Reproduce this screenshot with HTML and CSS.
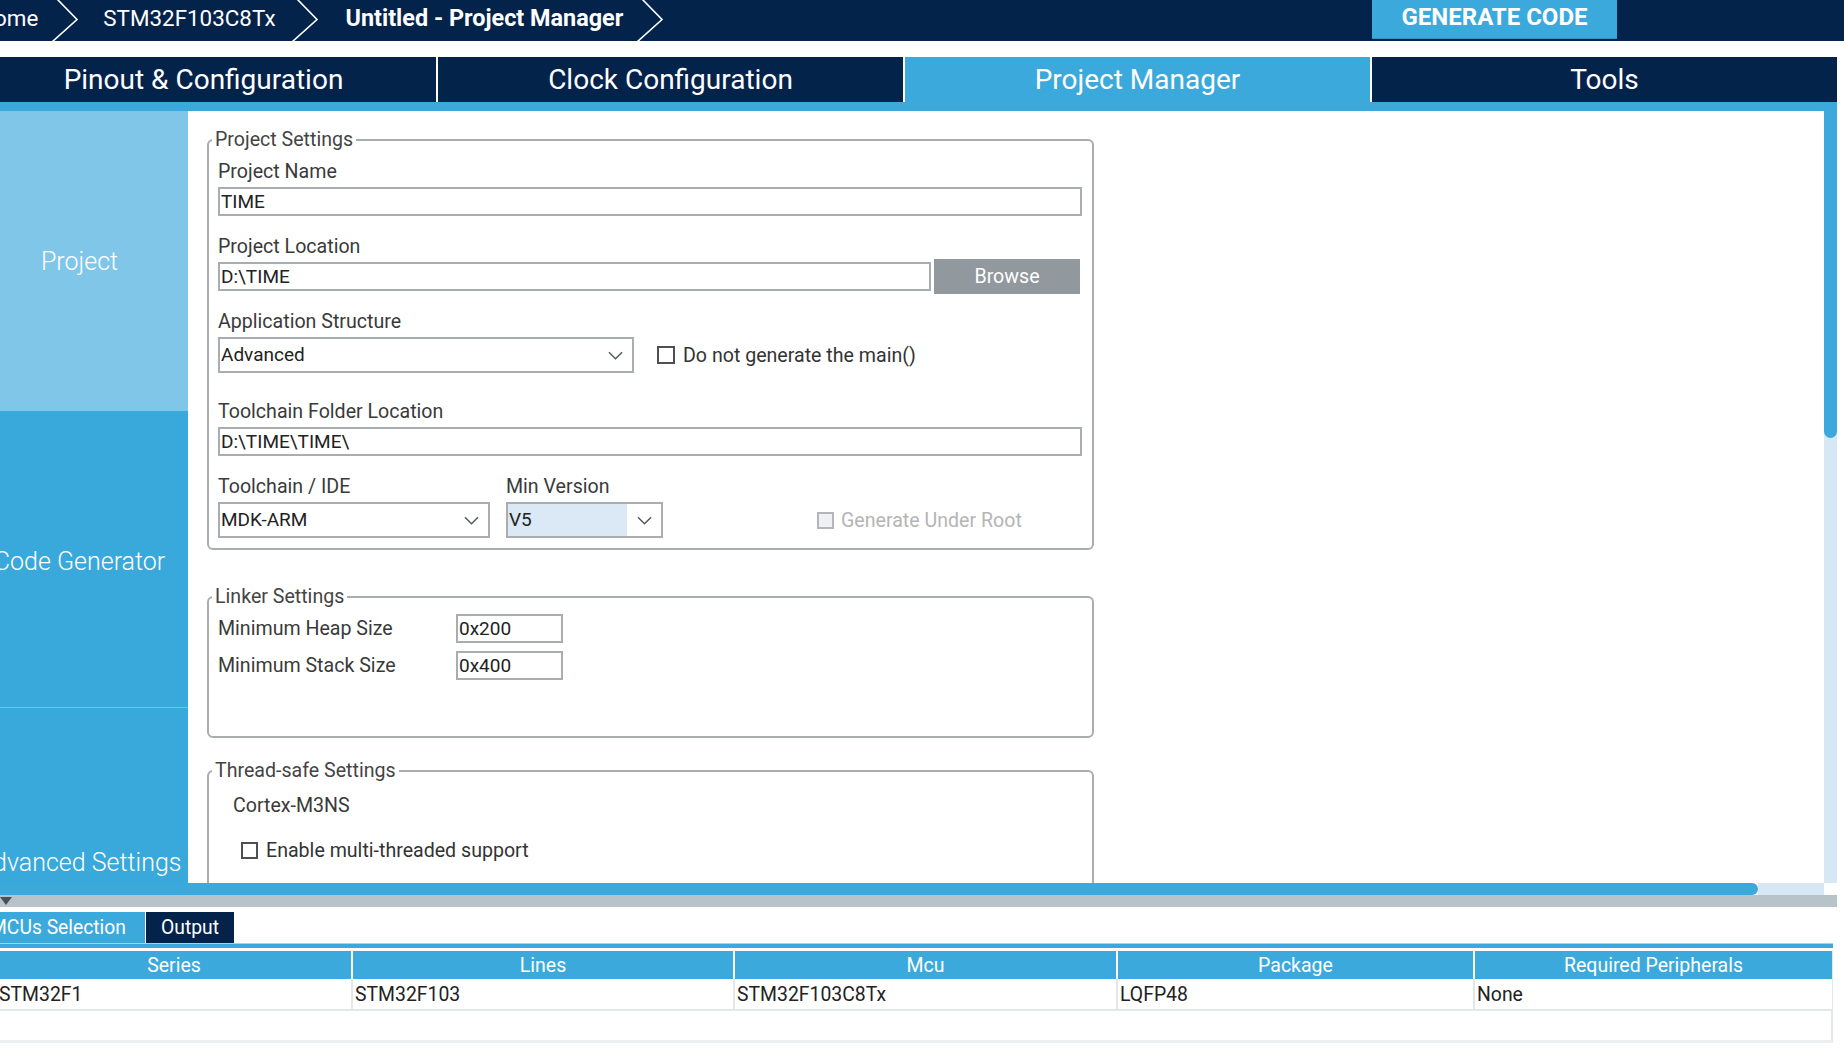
FILE: index.html
```html
<!DOCTYPE html>
<html lang="en">
<head>
<meta charset="utf-8">
<title>STM32CubeMX - Project Manager</title>
<link rel="stylesheet" href="styles.css">
</head>
<body>
<header class="topbar">
  <nav class="crumbs">
    <span class="crumb">Home</span>
    <svg class="chev" viewBox="0 0 30 41"><polyline points="8,-1 28,19.5 3,42"/></svg>
    <span class="crumb">STM32F103C8Tx</span>
    <svg class="chev chev-wide" viewBox="0 0 30 41"><polyline points="8,-1 28,19.5 3,42"/></svg>
    <span class="crumb crumb-current">Untitled - Project Manager</span>
    <svg class="chev" viewBox="0 0 30 41"><polyline points="8,-1 28,19.5 3,42"/></svg>
  </nav>
  <button class="generate">GENERATE CODE</button>
</header>

<div class="app">
  <nav class="tabs">
    <div class="tab">Pinout &amp; Configuration</div>
    <div class="tab">Clock Configuration</div>
    <div class="tab tab-active">Project Manager</div>
    <div class="tab">Tools</div>
  </nav>
  <div class="strip"></div>

  <div class="workspace">
    <aside class="sidebar">
      <div class="side-item side-active">Project</div>
      <div class="side-item side-mid">Code Generator</div>
      <div class="side-item side-last">Advanced Settings</div>
    </aside>

    <main class="content">
      <fieldset class="group group-project">
        <legend>Project Settings</legend>

        <div class="field">
          <div class="label">Project Name</div>
          <div class="input">TIME</div>
        </div>

        <div class="field field-loc">
          <div class="label label-tight">Project Location</div>
          <div class="row">
            <div class="input input-grow">D:\TIME</div>
            <button class="browse">Browse</button>
          </div>
        </div>

        <div class="field field-app">
          <div class="label">Application Structure</div>
          <div class="row">
            <div class="select select-app">
              <span class="select-value">Advanced</span>
              <span class="select-arrow"><svg viewBox="0 0 16 9"><polyline points="1,1 8,8 15,1"/></svg></span>
            </div>
            <label class="check check-main"><span class="box"></span>Do not generate the main()</label>
          </div>
        </div>

        <div class="field field-tcf">
          <div class="label">Toolchain Folder Location</div>
          <div class="input">D:\TIME\TIME\</div>
        </div>

        <div class="field field-ide">
          <div class="row row-bottom">
            <div class="col col-ide">
              <div class="label">Toolchain / IDE</div>
              <div class="select">
                <span class="select-value">MDK-ARM</span>
                <span class="select-arrow"><svg viewBox="0 0 16 9"><polyline points="1,1 8,8 15,1"/></svg></span>
              </div>
            </div>
            <div class="col col-ver">
              <div class="label">Min Version</div>
              <div class="select">
                <span class="select-value select-value-hl">V5</span>
                <span class="select-arrow"><svg viewBox="0 0 16 9"><polyline points="1,1 8,8 15,1"/></svg></span>
              </div>
            </div>
            <label class="check check-disabled"><span class="box"></span>Generate Under Root</label>
          </div>
        </div>
      </fieldset>

      <fieldset class="group group-linker">
        <legend>Linker Settings</legend>
        <div class="lrow">
          <span class="llabel">Minimum Heap Size</span>
          <div class="input input-small">0x200</div>
        </div>
        <div class="lrow">
          <span class="llabel">Minimum Stack Size</span>
          <div class="input input-small">0x400</div>
        </div>
      </fieldset>

      <fieldset class="group group-thread">
        <legend>Thread-safe Settings</legend>
        <div class="core">Cortex-M3NS</div>
        <label class="check check-thread"><span class="box"></span>Enable multi-threaded support</label>
      </fieldset>
    </main>

    <div class="vscroll"><div class="vthumb"></div></div>
  </div>

  <div class="hscroll"><div class="hthumb"></div><div class="htrack"></div><div class="hcorner"></div></div>
  <div class="divider"><span class="tri"></span></div>
</div>

<section class="bottom">
  <div class="btabs">
    <div class="btab btab-mcu">MCUs Selection</div>
    <div class="btab btab-out">Output</div>
  </div>
  <div class="bline"></div>
  <div class="table">
    <div class="thead">
      <div class="th">Series</div>
      <div class="th">Lines</div>
      <div class="th">Mcu</div>
      <div class="th">Package</div>
      <div class="th">Required Peripherals</div>
    </div>
    <div class="trow">
      <div class="td">STM32F1</div>
      <div class="td">STM32F103</div>
      <div class="td">STM32F103C8Tx</div>
      <div class="td">LQFP48</div>
      <div class="td">None</div>
    </div>
  </div>
</section>
</body>
</html>
```

FILE: styles.css
```css
* { box-sizing: border-box; }
html, body { margin: 0; padding: 0; }
body {
  width: 1844px;
  height: 1056px;
  overflow: hidden;
  background: #ffffff;
  font-family: Roboto, "Liberation Sans", sans-serif;
  color: #383838;
}

/* ---------- top bar ---------- */
.topbar {
  height: 41px;
  background: #03234b;
  display: flex;
  align-items: flex-start;
}
.crumbs {
  flex: 1;
  height: 41px;
  display: flex;
  align-items: center;
  margin-left: -22px;
  padding-bottom: 5px;
  overflow: hidden;
}
.crumb {
  color: #ffffff;
  font-size: 22.4px;
  white-space: nowrap;
}
.crumb-current { font-weight: 700; font-size: 23.4px; }
.chev {
  flex: none;
  width: 30px;
  height: 41px;
  margin: 5px 24px 0 11px;
  fill: none;
  stroke: #ffffff;
  stroke-width: 1.6;
}
.chev-wide { margin-left: 13px; margin-right: 27px; }
.generate {
  flex: none;
  width: 245px;
  height: 39px;
  margin-right: 227px;
  border: 0;
  border-bottom: 1px solid #2f93c4;
  padding: 0 0 4px;
  background: #3ba9dc;
  color: #ffffff;
  font-family: Roboto, "Liberation Sans", sans-serif;
  font-weight: 700;
  font-size: 24px;
}

/* ---------- app frame ---------- */
.app {
  margin-left: -29px;
  width: 1866px;
}
.tabs {
  margin-top: 16px;
  height: 45px;
  display: flex;
  gap: 2px;
}
.tab {
  flex: 1;
  background: #03234b;
  color: #ffffff;
  font-size: 28px;
  display: flex;
  align-items: center;
  justify-content: center;
  white-space: nowrap;
}
.tab-active { background: #3ba9dc; }
.strip {
  height: 9px;
  background: #3ba9dc;
}

.workspace {
  height: 772px;
  display: flex;
}

/* ---------- sidebar ---------- */
.sidebar {
  flex: none;
  width: 217px;
  background: #39a8db;
  display: flex;
  flex-direction: column;
  overflow: hidden;
}
.side-item {
  flex: none;
  height: 300px;
  display: flex;
  align-items: center;
  justify-content: center;
  color: #ffffff;
  font-size: 25px;
  font-weight: 300;
  white-space: nowrap;
}
.side-active { background: #7fc6e9; }
.side-mid { height: 296px; padding-top: 4px; }
.side-last { height: 308px; padding-top: 2px; border-top: 1px solid #74c1e7; }

/* ---------- content ---------- */
.content {
  flex: 1;
  min-width: 0;
  padding: 17px 0 0 19px;
  overflow: hidden;
}
.group {
  width: 887px;
  margin: 0;
  border: 2px solid #a9adb1;
  border-radius: 6px;
  padding: 8px 10px 10px 9px;
}
.group legend {
  margin-left: -6px;
  padding: 0 3px;
  font-size: 19.6px;
  line-height: 24px;
  color: #444444;
}
.group-linker { margin-top: 35px; padding-top: 5px; padding-bottom: 56px; }
.group-thread { margin-top: 21px; padding-top: 11px; height: 200px; }

.label {
  font-size: 19.6px;
  line-height: 24px;
  height: 24px;
  margin-bottom: 3px;
  color: #3a3a3a;
  white-space: nowrap;
}
.label-tight { margin-bottom: 0; }
.field-loc { margin-top: 19px; }
.field-app { margin-top: 16px; }
.field-tcf { margin-top: 27px; }
.field-ide { margin-top: 19px; }

.input {
  height: 29px;
  border: 2px solid #a9adb1;
  background: #ffffff;
  font-size: 19px;
  line-height: 25px;
  padding: 0 1px;
  color: #222222;
  white-space: nowrap;
}
.row {
  display: flex;
  align-items: center;
}
.row-bottom { align-items: flex-end; }
.input-grow { flex: 1; }
.browse {
  flex: none;
  width: 146px;
  height: 35px;
  margin: 0 2px 0 3px;
  border: 0;
  padding: 0;
  background: #91989e;
  color: #ffffff;
  font-family: Roboto, "Liberation Sans", sans-serif;
  font-size: 19.6px;
}

.select {
  height: 36px;
  border: 2px solid #a9adb1;
  display: flex;
  background: #ffffff;
}
.select-app { width: 416px; }
.select-value {
  flex: 1;
  font-size: 19px;
  line-height: 32px;
  padding-left: 1px;
  color: #222222;
}
.select-value-hl { background: #dbe8f5; }
.select-arrow {
  flex: none;
  width: 34px;
  display: flex;
  align-items: center;
  justify-content: center;
}
.select-arrow svg {
  width: 15px;
  height: 9px;
  fill: none;
  stroke: #555a5f;
  stroke-width: 1.6;
}
.col-ide { width: 272px; }
.col-ver { width: 157px; margin-left: 16px; }

.check {
  display: flex;
  align-items: center;
  font-size: 19.6px;
  color: #333333;
  white-space: nowrap;
}
.box {
  flex: none;
  width: 18px;
  height: 18px;
  border: 2px solid #4d4f52;
  background: #ffffff;
  margin-right: 8px;
}
.check-main { margin-left: 23px; }
.check-disabled {
  margin-left: 154px;
  height: 36px;
  color: #b5b5b5;
}
.check-disabled .box {
  width: 17px;
  height: 17px;
  border-color: #b3b6b9;
  background: #eef0f2;
  margin-right: 7px;
}

.lrow {
  display: flex;
  align-items: center;
  height: 29px;
}
.lrow + .lrow { margin-top: 8px; }
.llabel {
  width: 238px;
  font-size: 19.6px;
  color: #3a3a3a;
}
.input-small { width: 107px; }

.core {
  margin-left: 15px;
  font-size: 19.6px;
  line-height: 24px;
  color: #3a3a3a;
}
.check-thread {
  margin: 20px 0 0 23px;
  height: 24px;
}
.check-thread .box { width: 17px; height: 17px; }

/* ---------- scrollbars ---------- */
.vscroll {
  flex: none;
  width: 13px;
  background: #d7e7f4;
}
.vthumb {
  height: 327px;
  background: #3ba9dc;
  border-radius: 0 0 7px 7px;
}
.hscroll {
  height: 12px;
  display: flex;
}
.hthumb {
  width: 1787px;
  background: #3ba9dc;
  border-radius: 0 7px 7px 0;
}
.htrack {
  flex: 1;
  background: #d7e7f4;
}
.hcorner {
  width: 13px;
  background: #ffffff;
}
.divider {
  height: 12px;
  background: #b8c3c9;
  padding: 2px 0 0 29px;
}
.tri {
  display: block;
  width: 0;
  height: 0;
  border-left: 6px solid transparent;
  border-right: 6px solid transparent;
  border-top: 8px solid #4b5055;
}

/* ---------- bottom panel ---------- */
.bottom { margin-top: 5px; }
.btabs {
  display: flex;
  gap: 1px;
  height: 31px;
  margin-left: -29px;
}
.btab {
  display: flex;
  align-items: center;
  justify-content: center;
  color: #ffffff;
  font-size: 19.3px;
  white-space: nowrap;
}
.btab-mcu { width: 174px; background: #3ba9dc; }
.btab-out { width: 88px; background: #03234b; }
.bline {
  width: 1833px;
  height: 5px;
  background: #3ba9dc;
  border-top: 1px solid #9fd3ee;
}
.table {
  margin: 3px 0 0 -3px;
  width: 1836px;
  height: 92px;
  border-right: 2px solid #e4e7ea;
  border-bottom: 3px solid #eceef0;
}
.thead, .trow {
  display: grid;
  grid-template-columns: 354px 380px 381px 355px 357px;
  column-gap: 2px;
}
.thead { height: 28px; }
.th {
  background: #3ba9dc;
  color: #ffffff;
  font-size: 19.5px;
  display: flex;
  align-items: center;
  justify-content: center;
}
.trow {
  height: 32px;
  background: #e4e7ea;
  border-bottom: 2px solid #e4e7ea;
}
.td {
  background: #ffffff;
  font-size: 19.4px;
  color: #222222;
  display: flex;
  align-items: center;
  padding-left: 2px;
}
```
